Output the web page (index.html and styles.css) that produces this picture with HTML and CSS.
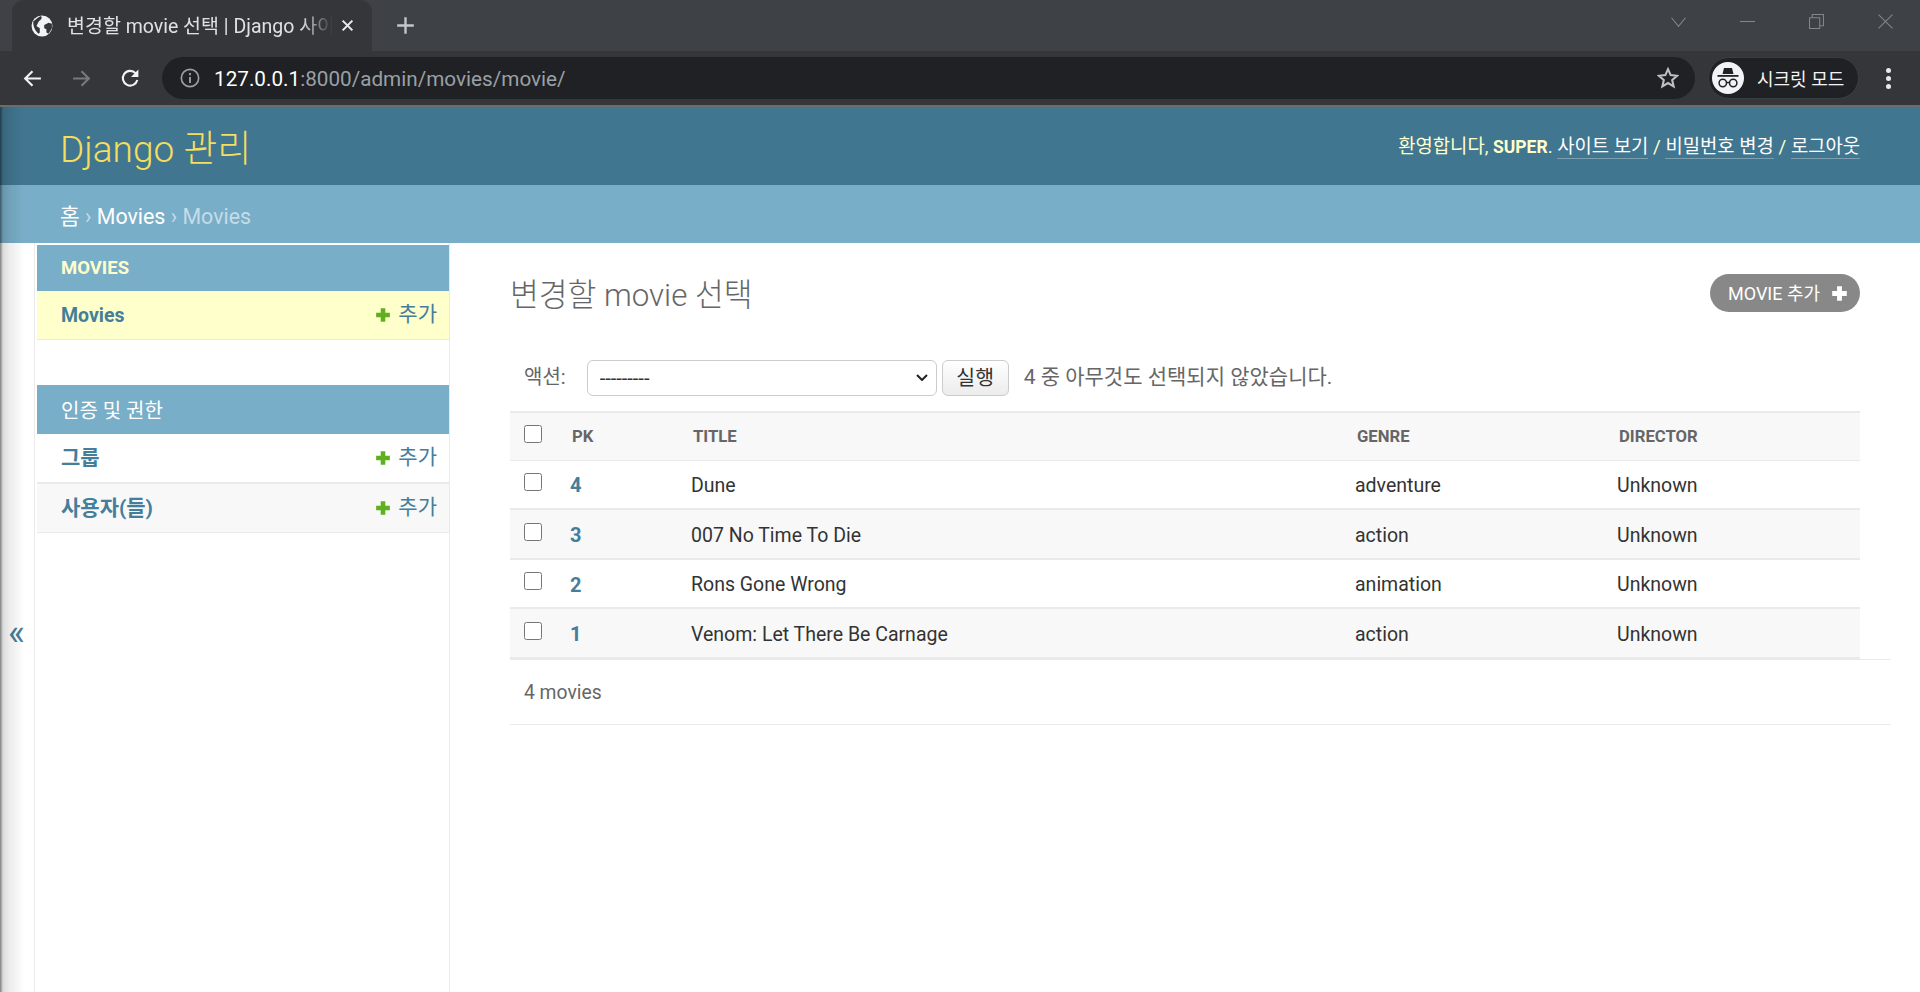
FILE: index.html
```html
<!DOCTYPE html>
<html lang="ko">
<head>
    <meta charset="UTF-8">
    <title>변경할 movie 선택 | Django 사이트 관리</title>
    <link rel="stylesheet" href="styles.css">
</head>
<body>
    <div class="tabstrip">
        <div class="tab">
            <svg class="favicon" viewBox="0 0 20 20"><circle cx="10" cy="10" r="9.5" fill="#f1f3f4"/><path d="M2 6c2-1 4-4 7-5 1 1 1 2 0 3L7 6 6 8l-1 2 3 2v4l-1 1c-3-2-5-6-5-11zM12 9l4-2 3 1 0 4-3 5-2-1 0-3-2-1z" fill="#35363a"/></svg>
            <span class="tab-title">변경할 movie 선택 | Django 사이트 관리</span>
            <svg class="tab-close" viewBox="0 0 12 12"><path d="M1.500 1.500l9 9M10.500 1.500l-9 9" stroke="#e8eaed" stroke-width="1.900"/></svg>
        </div>
        <svg class="new-tab" viewBox="0 0 16 16"><path d="M8 1v14M1 8h14" stroke="#c4c7ca" stroke-width="2"/></svg>
        <div class="window-buttons">
            <svg viewBox="0 0 14 14"><path d="M.5 3.500l6.500 8 6.500-8" fill="none" stroke="#80868b"/></svg>
            <svg viewBox="0 0 14 14"><path d="M0 7h14" stroke="#80868b"/></svg>
            <svg viewBox="0 0 14 14"><path d="M.5 3.500h9.500v10H.5zM3 3.500V.5h10.500v10.500H10" fill="none" stroke="#80868b"/></svg>
            <svg viewBox="0 0 14 14"><path d="M.5.5l13 13M13.500.5l-13 13" stroke="#80868b"/></svg>
        </div>
    </div>
    <div class="toolbar">
        <svg class="nav-icon" viewBox="0 0 20 20"><path d="M18 10H3M10 3l-7 7 7 7" fill="none" stroke="#f1f3f4" stroke-width="2"/></svg>
        <svg class="nav-icon" viewBox="0 0 20 20"><path d="M2 10h15M10 3l7 7-7 7" fill="none" stroke="#77797c" stroke-width="2"/></svg>
        <svg class="nav-icon" viewBox="0 0 20 20"><path d="M16.500 11.500A7 7 0 1 1 14.800 4.900" fill="none" stroke="#f1f3f4" stroke-width="2"/><path d="M17.500 1.500v7h-7z" fill="#f1f3f4"/></svg>
        <div class="omnibox">
            <svg class="info-icon" viewBox="0 0 18 18"><circle cx="9" cy="9" r="7.800" fill="none" stroke="#9aa0a6" stroke-width="1.500"/><path d="M9 8v5.500M9 4.500v2" stroke="#9aa0a6" stroke-width="1.700"/></svg>
            <span class="url"><b>127.0.0.1</b>:8000/admin/movies/movie/</span>
            <svg class="star" viewBox="0 0 20 20"><path d="M10 2l2.400 5.400 5.800.6-4.400 3.900 1.300 5.700-5.100-3-5.100 3 1.300-5.700L1.800 8l5.800-.6z" fill="none" stroke="#bdc1c6" stroke-width="1.900"/></svg>
        </div>
        <div class="incognito">
            <svg class="incognito-icon" viewBox="0 0 32 32"><circle cx="16" cy="16" r="16" fill="#f1f3f4"/><path d="M10.500 12l1.500-6h8l1.500 6z" fill="#202124"/><path d="M5.500 13h21v1.800h-21z" fill="#202124"/><circle cx="10.800" cy="21" r="3.700" fill="none" stroke="#202124" stroke-width="1.500"/><circle cx="21.200" cy="21" r="3.700" fill="none" stroke="#202124" stroke-width="1.500"/><path d="M14.500 20.500h3" stroke="#202124" stroke-width="1.500"/></svg>
            <span>시크릿 모드</span>
        </div>
        <div class="menu-dots"><i></i><i></i><i></i></div>
    </div>

    <div class="page">
        <div class="edge-shadow"></div>
        <header class="site-header">
            <div class="branding">Django 관리</div>
            <div class="user-tools">환영합니다, <strong>SUPER</strong>. <a href="#">사이트 보기</a> / <a href="#">비밀번호 변경</a> / <a href="#">로그아웃</a></div>
        </header>
        <div class="breadcrumbs"><a href="#">홈</a> › <a href="#">Movies</a> › Movies</div>

        <div class="main">
            <div class="toggle"><span>«</span></div>
            <nav class="sidebar">
                <div class="app-caption current-app">MOVIES</div>
                <div class="model-row current-model">
                    <a href="#" class="model-name">Movies</a>
                    <a href="#" class="addlink"><svg viewBox="0 0 14 14"><path d="M7 1v12M1 7h12" stroke="#5fb01f" stroke-width="4"/></svg>추가</a>
                </div>
                <div class="app-caption auth-app">인증 및 권한</div>
                <div class="model-row">
                    <a href="#" class="model-name ko">그룹</a>
                    <a href="#" class="addlink"><svg viewBox="0 0 14 14"><path d="M7 1v12M1 7h12" stroke="#5fb01f" stroke-width="4"/></svg>추가</a>
                </div>
                <div class="model-row even">
                    <a href="#" class="model-name ko">사용자(들)</a>
                    <a href="#" class="addlink"><svg viewBox="0 0 14 14"><path d="M7 1v12M1 7h12" stroke="#5fb01f" stroke-width="4"/></svg>추가</a>
                </div>
            </nav>

            <main class="content">
                <div class="content-head">
                    <h1>변경할 movie 선택</h1>
                    <a href="#" class="add-button">MOVIE 추가<svg viewBox="0 0 14 14"><path d="M7 1v12M1 7h12" stroke="#fff" stroke-width="4"/></svg></a>
                </div>
                <div class="actions">
                    <label>액션:</label>
                    <select><option>---------</option></select>
                    <button>실행</button>
                    <span class="counter">4 중 아무것도 선택되지 않았습니다.</span>
                </div>
                <table>
                    <colgroup><col class="col-check"><col class="col-pk"><col class="col-title"><col class="col-genre"><col class="col-director"></colgroup>
                    <thead>
                        <tr><th><input type="checkbox"></th><th>PK</th><th>TITLE</th><th>GENRE</th><th>DIRECTOR</th></tr>
                    </thead>
                    <tbody>
                        <tr><td><input type="checkbox"></td><td><a href="#">4</a></td><td>Dune</td><td>adventure</td><td>Unknown</td></tr>
                        <tr><td><input type="checkbox"></td><td><a href="#">3</a></td><td>007 No Time To Die</td><td>action</td><td>Unknown</td></tr>
                        <tr><td><input type="checkbox"></td><td><a href="#">2</a></td><td>Rons Gone Wrong</td><td>animation</td><td>Unknown</td></tr>
                        <tr><td><input type="checkbox"></td><td><a href="#">1</a></td><td>Venom: Let There Be Carnage</td><td>action</td><td>Unknown</td></tr>
                    </tbody>
                </table>
                <p class="paginator">4 movies</p>
            </main>
        </div>
    </div>
</body>
</html>
```

FILE: styles.css
```css
* {
    box-sizing: border-box;
}
html, body {
    height: 100%;
}
body {
    margin: 0;
    overflow: hidden;
    background: #fff;
    color: #333;
    font-family: Roboto, "Noto Sans CJK KR", sans-serif;
    font-size: 18px;
}
a {
    text-decoration: none;
    color: #447e9b;
}

/* browser chrome */
.tabstrip {
    height: 51px;
    display: flex;
    align-items: flex-end;
    padding-left: 12px;
    background: #3e4145;
}
.tab {
    width: 360px;
    height: 51px;
    display: flex;
    align-items: center;
    padding: 0 18px 0 19px;
    background: #35363a;
    border-radius: 12px 12px 0 0;
}
.favicon {
    width: 22px;
    height: 22px;
    margin-right: 14px;
    flex: none;
}
.tab-title {
    flex: 1;
    overflow: hidden;
    white-space: nowrap;
    margin-bottom: 2px;
    color: #dfe1e5;
    font-size: 19.5px;
    -webkit-mask-image: linear-gradient(to right, #000 88%, transparent 100%);
    mask-image: linear-gradient(to right, #000 88%, transparent 100%);
}
.tab-close {
    width: 13px;
    height: 13px;
    margin-left: 8px;
    flex: none;
}
.new-tab {
    width: 19px;
    height: 19px;
    margin: 0 0 16px 24px;
}
.window-buttons {
    margin-left: auto;
    height: 51px;
    display: flex;
    align-items: flex-start;
    padding: 14px 27px 0 0;
    gap: 54px;
}
.window-buttons svg {
    width: 15px;
    height: 15px;
}
.toolbar {
    height: 56px;
    display: flex;
    align-items: center;
    padding-left: 22px;
    background: #35363a;
    border-bottom: 2px solid #6b6c6e;
}
.nav-icon {
    width: 21px;
    height: 21px;
    margin-right: 28px;
    flex: none;
}
.omnibox {
    width: 1533px;
    height: 42px;
    margin-left: -7px;
    display: flex;
    align-items: center;
    padding: 0 16px 0 18px;
    background: #202124;
    border-radius: 21px;
}
.info-icon {
    width: 20px;
    height: 20px;
    margin-right: 14px;
}
.url {
    margin-top: 2px;
    color: #9aa0a6;
    font-size: 20.7px;
}
.url b {
    color: #fff;
    font-weight: 400;
}
.star {
    width: 22px;
    height: 22px;
    margin-left: auto;
}
.incognito {
    width: 151px;
    height: 42px;
    margin-left: 13px;
    display: flex;
    align-items: center;
    padding-left: 3px;
    border: 1px solid #3c3d41;
    border-radius: 21px;
    background: #202124;
    color: #f1f3f4;
    font-size: 18px;
}
.incognito-icon {
    width: 32px;
    height: 32px;
    margin-right: 13px;
}
.menu-dots {
    margin-left: 27px;
    display: flex;
    flex-direction: column;
    gap: 3px;
}
.menu-dots i {
    display: block;
    width: 5px;
    height: 5px;
    border-radius: 50%;
    background: #e8eaed;
}

/* django admin */
.page {
    position: relative;
    height: 885px;
    overflow: hidden;
}
.edge-shadow {
    position: absolute;
    left: 0;
    top: 0;
    bottom: 0;
    width: 24px;
    background: linear-gradient(to right, rgba(0, 0, 0, .5), rgba(0, 0, 0, .14) 3px, rgba(0, 0, 0, .08) 9px, rgba(0, 0, 0, 0));
    pointer-events: none;
}
.site-header {
    height: 78px;
    display: flex;
    align-items: center;
    justify-content: space-between;
    padding: 0 60px;
    background: #417690;
}
.branding {
    color: #f5dd5d;
    font-size: 37px;
    font-weight: 300;
}
.user-tools {
    color: #ffc;
    font-size: 18.8px;
    margin-top: -4px;
}
.user-tools strong {
    font-weight: 700;
    font-size: 17.5px;
}
.user-tools a {
    color: #fff;
    border-bottom: 1px solid rgba(255, 255, 255, .3);
}
.breadcrumbs {
    height: 58px;
    padding: 0 60px;
    background: #79aec8;
    color: #c4dce8;
    font-size: 21.4px;
    line-height: 63px;
}
.breadcrumbs a {
    color: #fff;
}
.main {
    display: flex;
    height: 749px;
}
.toggle {
    width: 35px;
    flex: none;
    display: flex;
    align-items: center;
    padding-left: 8px;
    border-right: 1px solid #eaeaea;
    color: #447e9b;
    font-size: 36px;
}
.toggle span {
    margin-top: 31px;
}
.sidebar {
    width: 415px;
    flex: none;
    padding: 2px 0 0 2px;
    border-right: 1px solid #eaeaea;
}
.app-caption {
    height: 46px;
    display: flex;
    align-items: center;
    padding-left: 24px;
    background: #79aec8;
    color: #fff;
}
.current-app {
    color: #ffc;
    font-size: 18.5px;
    font-weight: 700;
}
.auth-app {
    height: 49px;
    margin-top: 45px;
    font-size: 20px;
}
.model-row {
    height: 49px;
    display: flex;
    align-items: center;
    justify-content: space-between;
    padding: 0 12px 0 24px;
    border-bottom: 1px solid #eaeaea;
}
.current-model {
    background: #ffc;
}
.even {
    background: #f8f8f8;
    border-top: 1px solid #eaeaea;
    height: 50px;
}
.model-name {
    font-size: 19.5px;
    font-weight: 700;
}
.model-name.ko {
    font-size: 21px;
    margin-top: -4px;
}
.addlink {
    display: flex;
    align-items: center;
    gap: 7px;
    font-size: 21px;
    margin-top: -6px;
}
.addlink svg {
    width: 16px;
    height: 16px;
    margin-top: 5px;
}
.content {
    width: 1441px;
    flex: none;
    padding: 0 30px 0 60px;
}
.content-head {
    height: 109px;
    display: flex;
    align-items: center;
    justify-content: space-between;
    width: 1350px;
    padding-bottom: 8px;
}
.content h1 {
    margin: 0 0 3px;
    color: #666;
    font-size: 31.3px;
    font-weight: 300;
}
.add-button {
    width: 150px;
    height: 38px;
    display: flex;
    align-items: center;
    gap: 11px;
    margin-top: -1px;
    padding: 0 0 2px 18px;
    border-radius: 19px;
    background: #888;
    color: #fff;
    font-size: 18px;
}
.add-button svg {
    width: 17px;
    height: 17px;
    margin-top: 2px;
}
.actions {
    height: 59px;
    display: flex;
    align-items: center;
    padding: 0 0 8px 14px;
    color: #666;
    width: 1350px;
}
.actions label {
    margin: -4px 21px 0 0;
    font-size: 20px;
}
.actions select {
    width: 350px;
    height: 36px;
    padding-left: 12px;
    border: 1px solid #ccc;
    border-radius: 6px;
    background: #fff url("data:image/svg+xml,%3Csvg xmlns='http://www.w3.org/2000/svg' width='12' height='7'%3E%3Cpath d='M1 1l5 5 5-5' fill='none' stroke='%23222' stroke-width='2'/%3E%3C/svg%3E") no-repeat right 8px center;
    color: #333;
    font-family: Roboto, sans-serif;
    font-size: 20px;
    appearance: none;
}
.actions button {
    width: 67px;
    height: 36px;
    margin: 0 15px 0 5px;
    padding: 0 0 4px;
    border: 1px solid #ccc;
    border-radius: 6px;
    background: linear-gradient(#fff, #ececec);
    color: #333;
    font-family: inherit;
    font-size: 20.5px;
}
.counter {
    margin-top: -5px;
    font-size: 21px;
}
table {
    width: 1350px;
    table-layout: fixed;
    border-collapse: collapse;
}
.col-check { width: 50px; }
.col-pk { width: 121px; }
.col-title { width: 664px; }
.col-genre { width: 262px; }
th {
    height: 48px;
    padding: 0 0 0 12px;
    text-align: left;
    background: #f8f8f8;
    color: #666;
    font-size: 16.7px;
    font-weight: 700;
    border-top: 2px solid #eaeaea;
    border-bottom: 1px solid #eaeaea;
}
td {
    height: 49px;
    padding: 2px 0 0 10px;
    color: #333;
    font-size: 19.5px;
    border-bottom: 2px solid #eaeaea;
}
tbody tr:nth-child(even) td {
    height: 50px;
    background: #f8f8f8;
}
td a {
    font-weight: 700;
    font-size: 20px;
}
th input, td input {
    width: 18px;
    height: 18px;
    margin: 0 0 4px 5px;
    display: block;
}
td input {
    margin: 0 0 7px 14px;
}
th:first-child {
    padding-left: 9px;
}
td:first-child {
    padding-left: 0;
}
.paginator {
    height: 66px;
    margin: 0 -30px 0 0;
    display: flex;
    align-items: center;
    padding-left: 14px;
    color: #666;
    font-size: 19.3px;
    border-top: 1px solid #eaeaea;
    border-bottom: 1px solid #eaeaea;
}
```
